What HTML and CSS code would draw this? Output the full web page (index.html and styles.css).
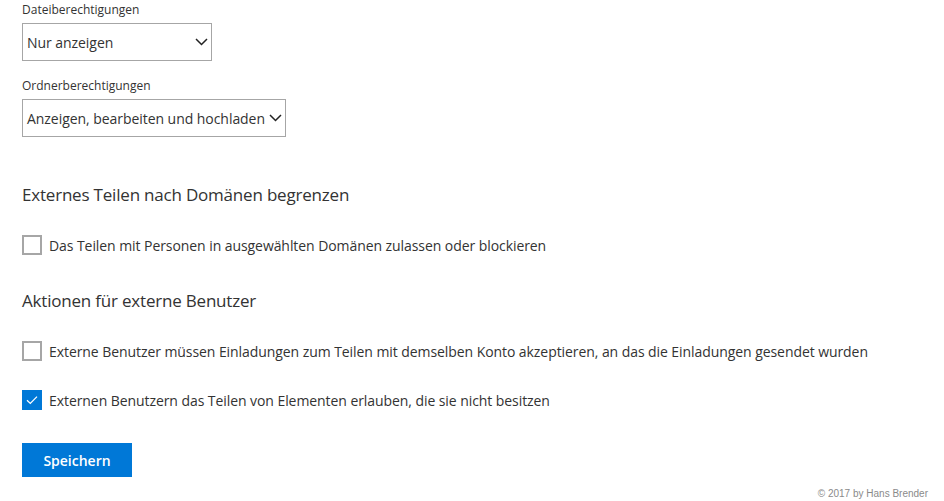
FILE: index.html
```html
<!DOCTYPE html>
<html lang="de">
<head>
<meta charset="utf-8">
<title>Freigabe</title>
<link rel="stylesheet" href="styles.css">
</head>
<body>
<main class="page">
  <div class="field-label">Dateiberechtigungen</div>
  <div class="select select-short">
    <span class="select-text">Nur anzeigen</span>
    <svg class="chev" width="13" height="8" viewBox="0 0 13 8"><path d="M1 1 L6.5 6.5 L12 1" fill="none" stroke="#222" stroke-width="1.5"/></svg>
  </div>
  <div class="field-label second">Ordnerberechtigungen</div>
  <div class="select select-long">
    <span class="select-text">Anzeigen, bearbeiten und hochladen</span>
    <svg class="chev" width="13" height="8" viewBox="0 0 13 8"><path d="M1 1 L6.5 6.5 L12 1" fill="none" stroke="#222" stroke-width="1.5"/></svg>
  </div>

  <h2 class="section first-section">Externes Teilen nach Domänen begrenzen</h2>
  <label class="check first-check"><span class="box"></span><span class="check-text">Das Teilen mit Personen in ausgewählten Domänen zulassen oder blockieren</span></label>

  <h2 class="section second-section">Aktionen für externe Benutzer</h2>
  <label class="check first-check"><span class="box"></span><span class="check-text">Externe Benutzer müssen Einladungen zum Teilen mit demselben Konto akzeptieren, an das die Einladungen gesendet wurden</span></label>
  <label class="check next-check"><span class="box checked"><svg width="12" height="10" viewBox="0 0 12 10"><path d="M1 5.2 L4.3 8.4 L11 1.6" fill="none" stroke="#fff" stroke-width="1.3"/></svg></span><span class="check-text">Externen Benutzern das Teilen von Elementen erlauben, die sie nicht besitzen</span></label>

  <button class="save">Speichern</button>
  <div class="footer">© 2017 by Hans Brender</div>
</main>
</body>
</html>
```
FILE: styles.css
```css
html, body {
  margin: 0;
  padding: 0;
  background: #ffffff;
}
body {
  font-family: "Open Sans", "Noto Sans", "Liberation Sans", sans-serif;
  color: #333333;
}
.page {
  padding: 2px 16px 0 22px;
}
.field-label {
  font-size: 12px;
  line-height: 16px;
  height: 16px;
  margin-bottom: 5px;
  color: #333;
}
.field-label.second {
  margin-top: 17px;
}
.select {
  box-sizing: border-box;
  height: 38px;
  border: 1px solid #a6a6a6;
  display: flex;
  align-items: center;
  justify-content: space-between;
  padding: 0 3px 0 4px;
}
.select-short { width: 190px; }
.select-long { width: 264px; }
.select-text {
  font-size: 14px;
  color: #333;
  letter-spacing: -0.05px;
  white-space: nowrap;
}
.chev {
  display: block;
  flex: none;
}
.section {
  margin: 0;
  font-size: 17px;
  line-height: 24px;
  font-weight: 400;
  color: #333;
  letter-spacing: -0.2px;
}
.first-section { margin-top: 46px; }
.second-section { margin-top: 34px; }
.check {
  display: flex;
  align-items: center;
  height: 20px;
}
.first-check { margin-top: 28px; }
.next-check { margin-top: 29px; }
.box {
  box-sizing: border-box;
  width: 20px;
  height: 20px;
  border: 2px solid #a6a6a6;
  flex: none;
  display: flex;
  align-items: center;
  justify-content: center;
}
.box.checked {
  background: #0078d7;
  border-color: #0078d7;
}
.check-text {
  margin-left: 7px;
  font-size: 14px;
  color: #333;
  letter-spacing: -0.07px;
  white-space: nowrap;
}
.save {
  display: block;
  margin-top: 33px;
  width: 110px;
  height: 34px;
  border: none;
  background: #0078d7;
  color: #fff;
  font-family: inherit;
  font-size: 14px;
  font-weight: 600;
  padding: 0;
}
.footer {
  margin-top: 10px;
  text-align: right;
  font-family: "Liberation Sans", Arial, sans-serif;
  font-size: 10px;
  line-height: 14px;
  color: #8a8a8a;
}
```
